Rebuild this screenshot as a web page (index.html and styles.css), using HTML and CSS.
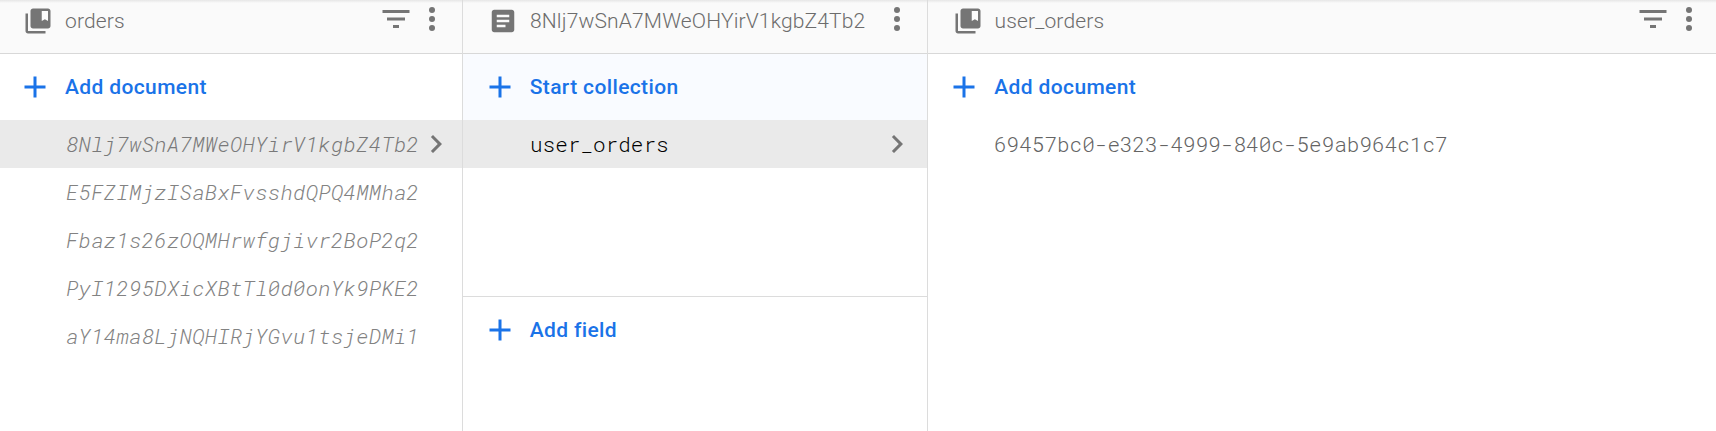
FILE: index.html
```html
<!DOCTYPE html>
<html lang="en">
<head>
<meta charset="utf-8">
<title>Data</title>
<link rel="stylesheet" href="styles.css">
</head>
<body>
<svg class="defs" aria-hidden="true">
  <symbol id="collection" viewBox="0 0 24 24"><path d="M4 6H2v14c0 1.100.9 2 2 2h14v-2H4V6z"/><path d="M20 2H8c-1.100 0-2 .9-2 2v12c0 1.100.9 2 2 2h12c1.100 0 2-.9 2-2V4c0-1.100-.9-2-2-2zm0 10l-2.500-1.500L15 12V4h5v8z"/></symbol>
  <symbol id="document" viewBox="0 0 24 24"><path d="M19 3H5c-1.100 0-2 .9-2 2v14c0 1.100.9 2 2 2h14c1.100 0 2-.9 2-2V5c0-1.100-.9-2-2-2zm-5 14H7v-2h7v2zm3-4H7v-2h10v2zm0-4H7V7h10v2z"/></symbol>
  <symbol id="filter" viewBox="0 0 24 24"><path d="M10 18h4v-2h-4v2zM3 6v2h18V6H3zm3 7h12v-2H6v2z"/></symbol>
  <symbol id="more" viewBox="0 0 24 24"><circle cx="12" cy="6" r="2"/><circle cx="12" cy="12" r="2"/><circle cx="12" cy="18" r="2"/></symbol>
  <symbol id="plus" viewBox="0 0 24 24"><path d="M19 13h-6v6h-2v-6H5v-2h6V5h2v6h6v2z"/></symbol>
  <symbol id="chevron" viewBox="0 0 24 24"><path d="M10 6L8.590 7.410 13.170 12l-4.580 4.590L10 18l6-6z"/></symbol>
</svg>
<main class="panels">
  <section class="panel">
    <header class="head">
      <svg class="kind"><use href="#collection"/></svg>
      <span class="title">orders</span>
      <svg class="action"><use href="#filter"/></svg>
      <svg class="action"><use href="#more"/></svg>
    </header>
    <div class="add"><svg class="plus"><use href="#plus"/></svg><span>Add document</span></div>
    <div class="row missing selected"><span class="id">8Nlj7wSnA7MWeOHYirV1kgbZ4Tb2</span><svg class="chevron"><use href="#chevron"/></svg></div>
    <div class="row missing"><span class="id">E5FZIMjzISaBxFvsshdQPQ4MMha2</span></div>
    <div class="row missing"><span class="id">Fbaz1s26zOQMHrwfgjivr2BoP2q2</span></div>
    <div class="row missing"><span class="id">PyI1295DXicXBtTl0d0onYk9PKE2</span></div>
    <div class="row missing"><span class="id">aY14ma8LjNQHIRjYGvu1tsjeDMi1</span></div>
  </section>
  <section class="panel">
    <header class="head">
      <svg class="kind"><use href="#document"/></svg>
      <span class="title">8Nlj7wSnA7MWeOHYirV1kgbZ4Tb2</span>
      <svg class="action"><use href="#more"/></svg>
    </header>
    <div class="collections">
      <div class="add tinted"><svg class="plus"><use href="#plus"/></svg><span>Start collection</span></div>
      <div class="row current selected"><span class="id">user_orders</span><svg class="chevron"><use href="#chevron"/></svg></div>
    </div>
    <div class="add"><svg class="plus"><use href="#plus"/></svg><span>Add field</span></div>
  </section>
  <section class="panel">
    <header class="head">
      <svg class="kind"><use href="#collection"/></svg>
      <span class="title">user_orders</span>
      <svg class="action"><use href="#filter"/></svg>
      <svg class="action"><use href="#more"/></svg>
    </header>
    <div class="add"><svg class="plus"><use href="#plus"/></svg><span>Add document</span></div>
    <div class="row"><span class="id">69457bc0-e323-4999-840c-5e9ab964c1c7</span></div>
  </section>
</main>
</body>
</html>
```
FILE: styles.css
```css
* { box-sizing: border-box; }
body { margin: 0; background: #fff; font-family: Roboto, "Liberation Sans", sans-serif; font-size: 21px; overflow: hidden; }
svg { fill: currentColor; flex: none; }
.defs { display: none; }
.panels { display: grid; grid-template-columns: 463px 465px 1fr; height: 431px; }
.panel { min-width: 0; border-right: 1px solid #dcdcdc; }
.panel:last-child { border-right: 0; }
.head { display: flex; align-items: center; height: 54px; padding: 1px 12px 12px 23px; background: linear-gradient(#e6e6e6, #f3f3f3 2px, #fafafa 3px); border-bottom: 1px solid #d8d8d8; color: #757575; }
.panel:nth-child(2) .head { padding-left: 25px; }
.panel:nth-child(3) .head { padding-left: 24.500px; padding-right: 9.500px; }
.kind { width: 30px; height: 30px; }
.title { flex: 1; margin-left: 12px; color: #6c6c6c; font-weight: 300; letter-spacing: 0.15px; white-space: nowrap; }
.action { width: 36px; height: 36px; margin-bottom: 4px; }
.add { display: flex; align-items: center; gap: 12px; height: 66px; padding-left: 17px; color: #1a73e8; font-weight: 500; letter-spacing: 0.37px; }
.panel:nth-child(2) .add { padding-left: 18.700px; }
.panel:nth-child(3) .add { padding-left: 18.300px; }
.plus { width: 36px; height: 36px; }
.tinted { background: #f9fbff; }
.row { display: flex; align-items: center; height: 48px; padding: 0 8px 0 66px; font-family: "Roboto Mono", "Liberation Mono", monospace; font-weight: 300; color: #646464; }
.id { flex: 1; min-width: 0; white-space: nowrap; }
.missing { color: #828282; font-style: italic; letter-spacing: 0.29px; }
.selected { background: #eaeaea; color: #797979; }
.current { color: #000; padding: 0 12px 0 67px; }
.chevron { width: 36px; height: 36px; color: #757575; }
.collections { height: 243px; border-bottom: 1px solid #dcdcdc; }
```
